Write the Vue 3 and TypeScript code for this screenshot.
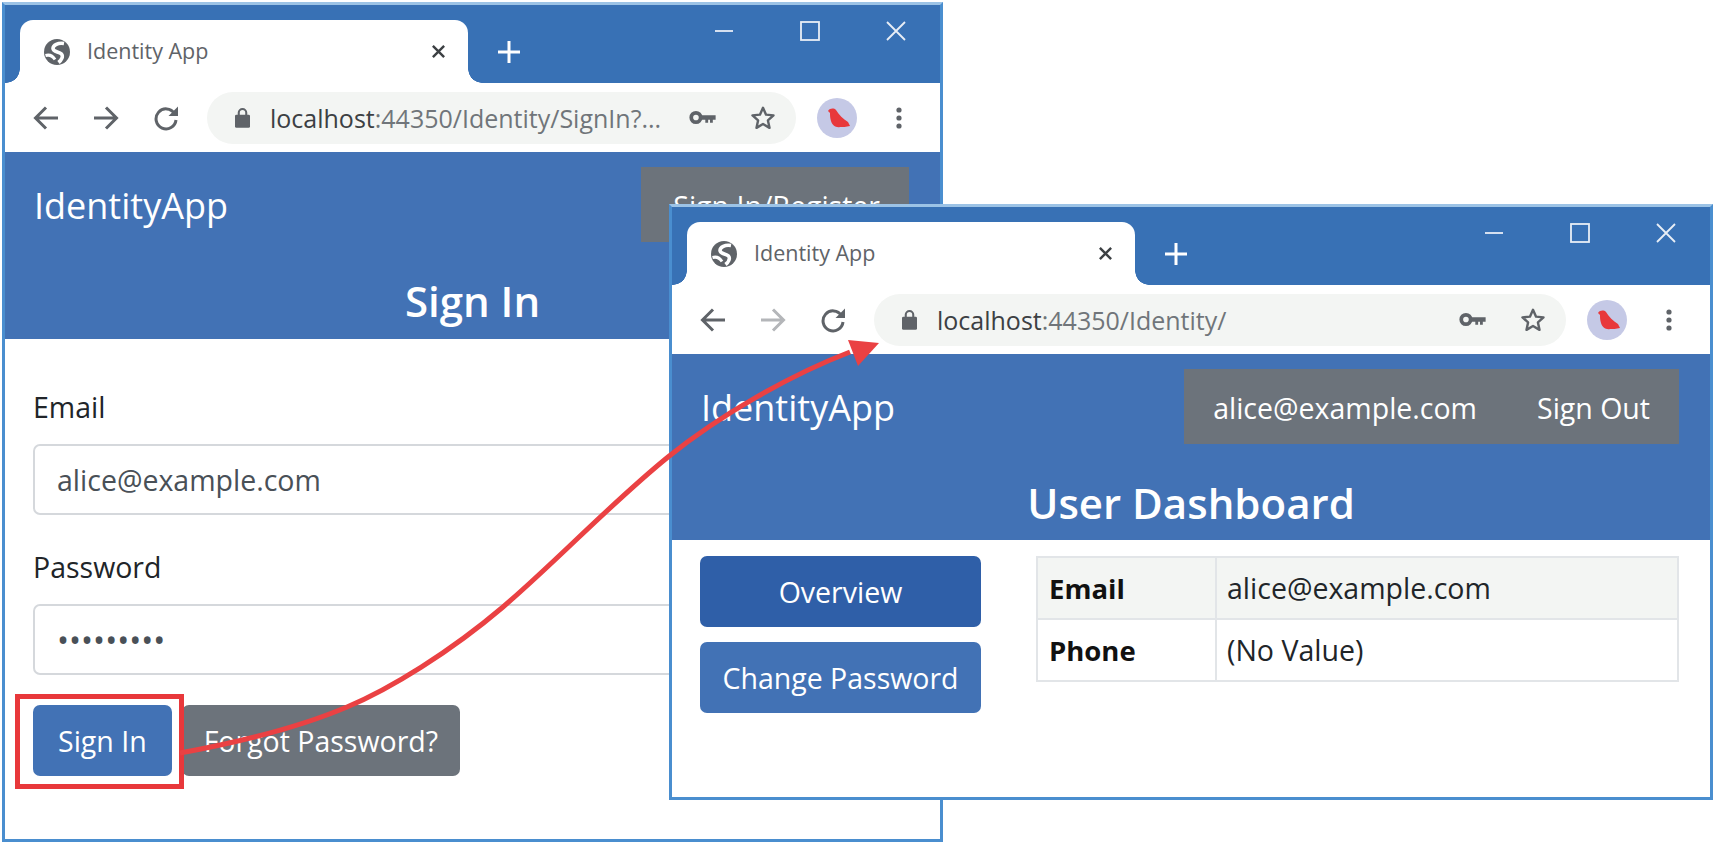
<script setup lang="ts">
interface Win {
  id: string;
  url: string;
  urlTail: string;
  forwardOff: boolean;
  heading: string;
}

const signIn: Win = {
  id: "back",
  url: "localhost",
  urlTail: ":44350/Identity/SignIn?...",
  forwardOff: false,
  heading: "Sign In",
};
const dashboard: Win = {
  id: "front",
  url: "localhost",
  urlTail: ":44350/Identity/",
  forwardOff: true,
  heading: "User Dashboard",
};
const windows = [signIn, dashboard];
</script>

<template>
  <div class="desktop">
    <section v-for="w in windows" :key="w.id" class="window" :class="w.id">
      <div class="strip">
        <div class="tab">
          <svg class="globe" viewBox="0 0 26 26">
            <circle cx="13" cy="13" r="13" fill="#5f6368" />
            <path d="M20 4.500C14 3.500 9 6 9 9.500c0 3.500 6 3 8.500 5.500 2 2.500 0 6-3 8.500" fill="none" stroke="#fff" stroke-width="3.600" />
            <path d="M1.500 16.500c3.500-1 7 0 9.500 4" fill="none" stroke="#fff" stroke-width="3" />
          </svg>
          <span class="tab-title">Identity App</span>
          <svg class="tab-close" viewBox="0 0 16 16">
            <path d="M2 2l12 12M14 2L2 14" stroke="#3c4043" stroke-width="2.6" fill="none" />
          </svg>
        </div>
        <svg class="new-tab" viewBox="0 0 22 22">
          <path d="M11 0v22M0 11h22" stroke="#fff" stroke-width="3" fill="none" />
        </svg>
        <div class="controls">
          <svg viewBox="0 0 20 20"><path d="M1 10h18" stroke="#e8eef6" stroke-width="1.8" fill="none" /></svg>
          <svg viewBox="0 0 20 20"><rect x="1" y="1" width="18" height="18" stroke="#e8eef6" stroke-width="1.8" fill="none" /></svg>
          <svg viewBox="0 0 20 20"><path d="M1 1l18 18M19 1L1 19" stroke="#e8eef6" stroke-width="1.8" fill="none" /></svg>
        </div>
      </div>

      <div class="toolbar">
        <svg class="nav-icon" viewBox="0 0 26 26">
          <path d="M25 13H3M13 2.500L2.500 13 13 23.500" stroke="#5f6368" stroke-width="3" fill="none" />
        </svg>
        <svg class="nav-icon" viewBox="0 0 26 26">
          <path
            d="M1 13h22M13 2.500L23.500 13 13 23.500"
            :stroke="w.forwardOff ? '#b4b6b9' : '#5f6368'"
            stroke-width="3"
            fill="none"
          />
        </svg>
        <svg class="nav-icon" viewBox="0 0 26 26">
          <path d="M21.500 8.500A10 10 0 1 0 23 15" stroke="#5f6368" stroke-width="3" fill="none" />
          <path d="M25 1.500V11H15.500z" fill="#5f6368" />
        </svg>
        <div class="omnibox">
          <svg class="lock" viewBox="0 0 16 22">
            <path d="M4 9V6a4 4 0 0 1 8 0v3" stroke="#5f6368" stroke-width="2.2" fill="none" />
            <rect x="0" y="8" width="16" height="14" rx="1.5" fill="#5f6368" />
          </svg>
          <span class="url"><b>{{ w.url }}</b>{{ w.urlTail }}</span>
          <svg class="key" viewBox="0 0 28 16">
            <circle cx="7" cy="8" r="5" stroke="#5f6368" stroke-width="4" fill="none" />
            <path d="M11 5.500h17v5h-3v3h-3v-3h-2v3h-3v-3h-6z" fill="#5f6368" />
          </svg>
          <svg class="star" viewBox="0 0 28 28">
            <path
              d="M14 3l3.300 7.400 8 .8-6 5.400 1.700 8L14 20.500 7 24.600l1.700-8-6-5.400 8-.8z"
              stroke="#5f6368"
              stroke-width="2.600"
              stroke-linejoin="round"
              fill="none"
            />
          </svg>
        </div>
        <div class="avatar">
          <svg viewBox="0 0 40 40">
            <path d="M11 13C13 10 17 10 19 12C22 17 26 21 31 24L33 28C29 29 26 29 23 29C19 30 15 27 14 23C13 20 13 17 13 15Z" fill="#e8383b" />
          </svg>
        </div>
        <svg class="menu" viewBox="0 0 6 24">
          <circle cx="3" cy="4" r="2.6" fill="#5f6368" />
          <circle cx="3" cy="12" r="2.6" fill="#5f6368" />
          <circle cx="3" cy="20" r="2.6" fill="#5f6368" />
        </svg>
      </div>

      <div class="site-head">
        <div class="site-nav">
          <span class="brand">IdentityApp</span>
          <div v-if="w.id === 'back'" class="nav-box wide">
            <span class="nav-link">Sign In/Register</span>
          </div>
          <div v-else class="nav-box">
            <span class="nav-link">alice@example.com</span>
            <span class="nav-link">Sign Out</span>
          </div>
        </div>
        <h1>{{ w.heading }}</h1>
      </div>

      <div v-if="w.id === 'back'" class="form">
        <label>Email</label>
        <div class="input">alice@example.com</div>
        <label>Password</label>
        <div class="input dots">•••••••••</div>
        <div class="actions">
          <button class="btn primary">Sign In</button>
          <button class="btn grey">Forgot Password?</button>
        </div>
      </div>

      <div v-else class="dash">
        <div class="side">
          <button class="btn side-btn active">Overview</button>
          <button class="btn side-btn primary">Change Password</button>
        </div>
        <table>
          <tbody>
            <tr class="striped">
              <th>Email</th>
              <td>alice@example.com</td>
            </tr>
            <tr>
              <th>Phone</th>
              <td>(No Value)</td>
            </tr>
          </tbody>
        </table>
      </div>
    </section>

    <div class="highlight"></div>
    <svg class="arrow" viewBox="0 0 1714 843">
      <path
        d="M180 753C240 742 300 727 347 707C390 689 450 652 503 607C558 560 610 504 668 457C720 415 790 375 850 352"
        fill="none"
        stroke="#ea4143"
        stroke-width="5"
      />
      <path d="M879 343L848 340L858 366z" fill="#ea4143" />
    </svg>
  </div>
</template>

<style>
html,
body {
  margin: 0;
  background: #fff;
}
</style>

<style scoped>
.desktop {
  position: relative;
  width: 1714px;
  height: 843px;
  overflow: hidden;
  font-family: "Open Sans", "Noto Sans", sans-serif;
  color: #212529;
}

.window {
  position: absolute;
  box-sizing: border-box;
  display: flex;
  flex-direction: column;
  border: 3px solid #4a8ecf;
  border-top-color: #9cc3e6;
  background: #fff;
  overflow: hidden;
}
.window.back {
  left: 2px;
  top: 2px;
  width: 941px;
  height: 840px;
}
.window.front {
  left: 669px;
  top: 204px;
  width: 1044px;
  height: 596px;
}

.strip {
  flex: none;
  height: 78px;
  display: flex;
  align-items: flex-start;
  background: #3871b5;
}
.tab {
  position: relative;
  box-sizing: border-box;
  width: 448px;
  height: 63px;
  margin: 15px 0 0 15px;
  padding: 0 22px 0 24px;
  display: flex;
  align-items: center;
  background: #fff;
  border-radius: 13px 13px 0 0;
}
.tab::before,
.tab::after {
  content: "";
  position: absolute;
  bottom: 0;
  width: 14px;
  height: 14px;
}
.tab::before {
  left: -14px;
  background: radial-gradient(circle at 0 0, #3871b5 13.5px, #fff 14px);
}
.tab::after {
  right: -14px;
  background: radial-gradient(circle at 100% 0, #3871b5 13.5px, #fff 14px);
}
.globe {
  width: 26px;
  height: 26px;
  flex: none;
}
.tab-title {
  margin-left: 17px;
  font-size: 21.500px;
  line-height: 26px;
  padding-bottom: 2px;
  color: #5f6368;
  flex: 1;
}
.tab-close {
  width: 15px;
  height: 15px;
  flex: none;
}
.new-tab {
  width: 22px;
  height: 22px;
  margin: 36px 0 0 30px;
  flex: none;
}
.controls {
  margin-left: auto;
  margin-right: 34px;
  margin-top: 16px;
  display: flex;
  gap: 66px;
}
.controls svg {
  width: 20px;
  height: 20px;
  display: block;
}

.toolbar {
  flex: none;
  box-sizing: border-box;
  height: 69px;
  display: flex;
  align-items: center;
  padding: 0 38px 0 28px;
  background: #fff;
}
.nav-icon {
  width: 26px;
  height: 26px;
  flex: none;
  margin-right: 34px;
}
.omnibox {
  flex: 1;
  min-width: 0;
  height: 52px;
  margin-left: -6px;
  padding: 0 20px 0 28px;
  display: flex;
  align-items: center;
  background: #f3f5f3;
  border-radius: 26px;
}
.lock {
  width: 15px;
  height: 21px;
  flex: none;
}
.url {
  margin-left: 20px;
  flex: 1;
  font-size: 25px;
  color: #70757a;
  white-space: nowrap;
}
.url b {
  font-weight: 400;
  color: #3c4043;
}
.key {
  width: 27px;
  height: 15px;
  flex: none;
  margin-right: 34px;
}
.star {
  width: 26px;
  height: 26px;
  flex: none;
}
.avatar {
  width: 40px;
  height: 40px;
  margin-left: 21px;
  border-radius: 50%;
  background: #c5c9e6;
  flex: none;
}
.avatar svg {
  display: block;
}
.menu {
  width: 6px;
  height: 24px;
  margin-left: 39px;
  flex: none;
}

.site-head {
  flex: none;
  background: #4272b5;
  color: #fff;
  height: 187px;
  display: flex;
  flex-direction: column;
}
.front .site-head {
  height: 186px;
}
.site-nav {
  display: flex;
  align-items: center;
  justify-content: space-between;
  padding: 15px 31px 0 29px;
}
.brand {
  font-size: 36px;
  line-height: 50px;
  padding-top: 2px;
}
.nav-box {
  height: 75px;
  display: flex;
  align-items: center;
  background: #6c737b;
  padding: 0 29px;
  gap: 60px;
}
.nav-box.wide {
  padding-left: 32px;
}
.nav-link {
  font-size: 28.500px;
  padding-top: 2px;
  white-space: nowrap;
}
h1 {
  margin: 0;
  margin-top: 30px;
  text-align: center;
  font-size: 42px;
  font-weight: 600;
  line-height: 58px;
}

.form {
  padding: 0 30px 0 28px;
}
label {
  display: block;
  font-size: 28.500px;
  line-height: 34px;
}
.form label:first-child {
  margin-top: 51px;
}
.input {
  box-sizing: border-box;
  height: 71px;
  margin: 20px 0 0;
  padding: 0 22px;
  display: flex;
  align-items: center;
  border: 2px solid #d5d8dc;
  border-radius: 7px;
  font-size: 28.500px;
  color: #495057;
}
.input + label {
  margin-top: 35px;
}
.dots {
  font-size: 32px;
}
.actions {
  margin-top: 30px;
  display: flex;
  gap: 10px;
}
.btn {
  box-sizing: border-box;
  height: 71px;
  padding: 0 22px;
  border: none;
  border-radius: 7px;
  color: #fff;
  font: inherit;
  font-size: 28.500px;
}
.actions .primary {
  padding: 0 25px;
}
.primary {
  background: #4272b5;
}
.grey {
  background: #6c737b;
}
.actions .btn {
  flex: none;
}

.dash {
  display: flex;
  padding: 16px 32px 0 28px;
  gap: 55px;
}
.side {
  width: 281px;
  flex: none;
  display: flex;
  flex-direction: column;
  gap: 15px;
}
.side-btn {
  width: 100%;
  padding: 0;
}
.active {
  background: #2f5fa8;
}
table {
  flex: 1;
  border-collapse: collapse;
  align-self: flex-start;
  font-size: 28.500px;
  margin-right: -1px;
}
th,
td {
  height: 60px;
  padding: 0 10px;
  border: 2px solid #e2e5e8;
  text-align: left;
}
th {
  width: 156px;
  padding-left: 11px;
  font-size: 27.500px;
  font-weight: 700;
  color: #111;
}
.striped {
  background: #f3f5f3;
}

.highlight {
  position: absolute;
  left: 15px;
  top: 694px;
  width: 169px;
  height: 95px;
  box-sizing: border-box;
  border: 5px solid #e8383b;
}
.arrow {
  position: absolute;
  left: 0;
  top: 0;
  width: 1714px;
  height: 843px;
  pointer-events: none;
}
</style>
